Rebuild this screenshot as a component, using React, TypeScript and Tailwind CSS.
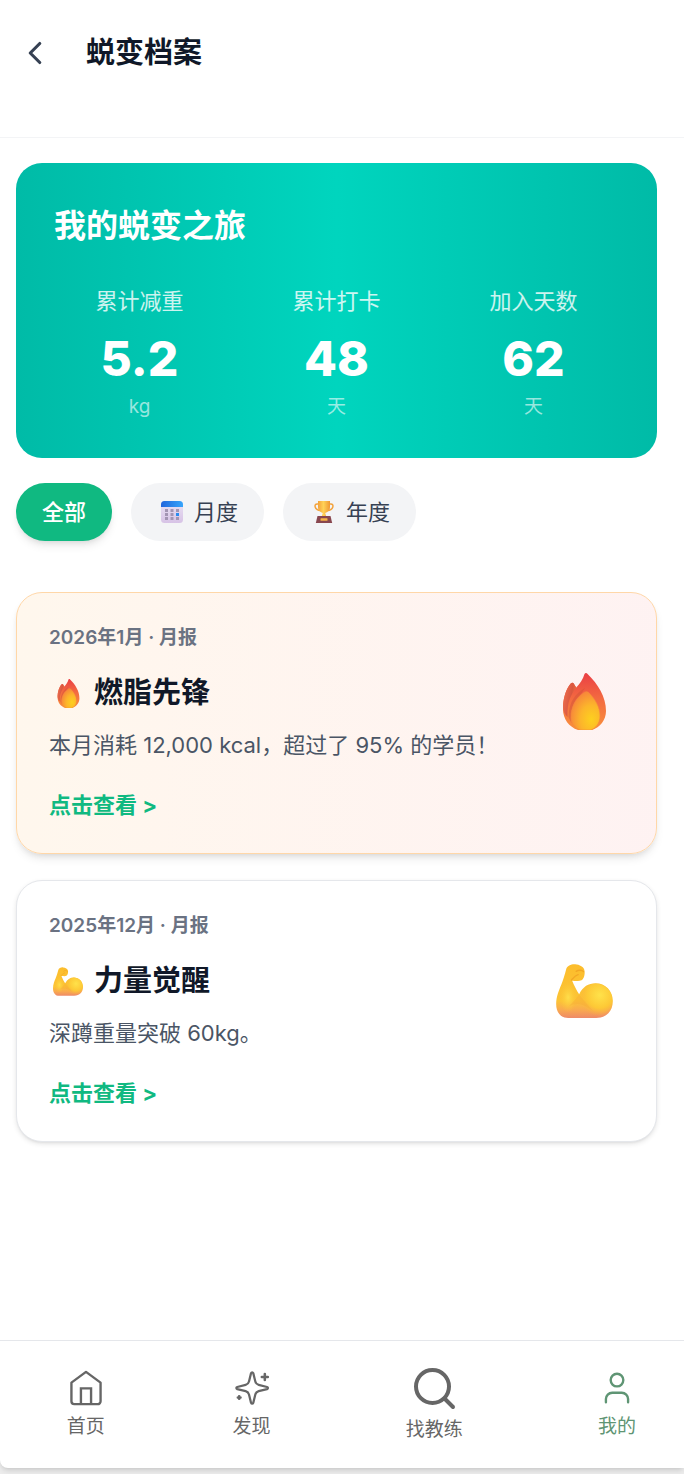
/**
 * TransformArchive — the "蜕变档案" page of the fitness app.
 *
 * Top to bottom: page header, journey summary card, period filter,
 * list of report cards and the bottom tab bar.
 */

import { useId, useState, type ReactNode } from "react";
import { ChevronLeft, User } from "lucide-react";
import { clsx } from "clsx";

type Period = "all" | "month" | "year";

function Flame({ className }: { className?: string }) {
  const id = useId();
  return (
    <svg viewBox="0 0 43 57" className={className} aria-hidden>
      <defs>
        <linearGradient id={`${id}-outer`} x1="0.5" y1="0" x2="0.5" y2="1">
          <stop offset="0" stopColor="#ea3f45" />
          <stop offset="0.45" stopColor="#f36a40" />
          <stop offset="1" stopColor="#f9903c" />
        </linearGradient>
        <linearGradient id={`${id}-left`} x1="0" y1="0.2" x2="1" y2="0.6">
          <stop offset="0" stopColor="#ee6f4f" />
          <stop offset="0.6" stopColor="#d9573f" />
          <stop offset="1" stopColor="#f2793f" />
        </linearGradient>
        <radialGradient id={`${id}-core`} cx="0.7" cy="0.72" r="0.75">
          <stop offset="0" stopColor="#fdd01f" />
          <stop offset="0.5" stopColor="#fcb52b" />
          <stop offset="1" stopColor="#f7853b" />
        </radialGradient>
      </defs>
      <path
        d="M21.5 1C22.3 -0.2 23.6 -0.2 24.6 1C35 11 43 24 43 38C43 47 37 54.5 29 57H15C6 54 0 46 0 36C0 26 3 16 7.5 10.8C8.8 9.2 10.3 9.4 11 11L13.2 14.5C17 11 20 6 21.5 1Z"
        fill={`url(#${id}-outer)`}
      />
      <path
        d="M7.5 10.8C8.8 9.2 10.3 9.4 11 11L13.2 14.5C8 22 4 28 4.5 44C1.7 41 0 38 0 34C0 26 3 16 7.5 10.8Z"
        fill={`url(#${id}-left)`}
      />
      <path
        d="M22 15C13 20 6 28 5.5 44L8.5 50C7 38 10 28 18 21Z"
        fill="#cf5237"
        opacity="0.45"
      />
      <path
        d="M21 19.5C22.5 18.3 24.5 18.3 26 19.8C32 26 37 34 37 43C37 50 33 55 28 57H17C11 54.5 8 50 8 44C8 34 13 25 21 19.5Z"
        fill={`url(#${id}-core)`}
        stroke="#f58a3a"
        strokeWidth="0.6"
      />
    </svg>
  );
}

function Biceps({ className }: { className?: string }) {
  const id = useId();
  return (
    <svg viewBox="0 0 170 162" className={className} aria-hidden>
      <defs>
        <linearGradient id={`${id}-arm`} x1="0.5" y1="0" x2="0.5" y2="1">
          <stop offset="0" stopColor="#fcbd2c" />
          <stop offset="0.68" stopColor="#fcc436" />
          <stop offset="0.85" stopColor="#f9a950" />
          <stop offset="1" stopColor="#ee8a68" />
        </linearGradient>
        <radialGradient id={`${id}-muscle`} cx="0.62" cy="0.35" r="0.65">
          <stop offset="0" stopColor="#ffe24a" />
          <stop offset="0.6" stopColor="#fdc936" />
          <stop offset="1" stopColor="#f9b13d" stopOpacity="0" />
        </radialGradient>
        <radialGradient id={`${id}-fore`} cx="0.5" cy="0.5" r="0.5">
          <stop offset="0" stopColor="#ffde4b" />
          <stop offset="1" stopColor="#fdc936" stopOpacity="0" />
        </radialGradient>
      </defs>
      <path
        d="M30 16C33 5 46 0 57 1C70 2 84 9 85 20C87 31 83 45 76 49C68 53 56 50 48 50C54 65 62 80 69 91C80 68 97 58 118 58C148 58 170 81 170 111C170 141 151 162 120 162H36C13 162 0 145 0 120C0 98 9 77 15 63C21 49 26 31 30 16Z"
        fill={`url(#${id}-arm)`}
      />
      <ellipse cx="36" cy="100" rx="26" ry="46" fill={`url(#${id}-fore)`} />
      <circle cx="119" cy="108" r="49" fill={`url(#${id}-muscle)`} />
      <path d="M69 92L40 126C55 117 80 116 110 141Z" fill="#f5a234" opacity="0.3" />
      <path
        d="M60 22C67 17 78 18 82 23M46 48C53 40 57 34 66 32"
        fill="none"
        stroke="#ed9b20"
        strokeWidth="4"
        strokeLinecap="round"
        opacity="0.65"
      />
    </svg>
  );
}

function CalendarEmoji() {
  const id = useId();
  return (
    <svg viewBox="0 0 22 22" className="size-[22px]" aria-hidden>
      <defs>
        <linearGradient id={`${id}-top`} x1="0" x2="1">
          <stop offset="0" stopColor="#2266dc" />
          <stop offset="1" stopColor="#36a5fb" />
        </linearGradient>
        <linearGradient id={`${id}-page`} x1="0" y1="0" x2="0" y2="1">
          <stop offset="0" stopColor="#eae4f4" />
          <stop offset="1" stopColor="#d7c3e6" />
        </linearGradient>
      </defs>
      <rect width="22" height="22" rx="3.5" fill={`url(#${id}-page)`} />
      <path d="M0 6V3.5A3.5 3.5 0 0 1 3.5 0H18.5A3.5 3.5 0 0 1 22 3.5V6Z" fill={`url(#${id}-top)`} />
      <path
        d="M4 8h3v3H4zM9.5 8h3v3h-3zM15 8h3v3h-3zM4 12h3v3H4zM9.5 12h3v3h-3zM4 16h3v3H4zM9.5 16h3v3h-3zM15 16h3v3h-3z"
        fill="#a395b3"
      />
      <path d="M15 12h3v3h-3z" fill="#2c8cf0" />
    </svg>
  );
}

function TrophyEmoji() {
  const id = useId();
  return (
    <svg viewBox="0 0 20 22" className="h-[22px] w-5" aria-hidden>
      <defs>
        <linearGradient id={`${id}-cup`} x1="0" x2="1">
          <stop offset="0" stopColor="#f3a13a" />
          <stop offset="0.45" stopColor="#ffd257" />
          <stop offset="1" stopColor="#ef9732" />
        </linearGradient>
      </defs>
      <path
        d="M5 3H3.2C1.2 3 0.8 4.4 1.2 6C1.8 8.3 4 9.4 6.5 9.5M15 3H16.8C18.8 3 19.2 4.4 18.8 6C18.2 8.3 16 9.4 13.5 9.5"
        fill="none"
        stroke="#f2a23d"
        strokeWidth="1.5"
      />
      <path
        d="M4 0H16V6C16 9.5 13.8 11.3 11.2 12L12.4 16H7.6L8.8 12C6.2 11.3 4 9.5 4 6Z"
        fill={`url(#${id}-cup)`}
      />
      <path d="M3.5 15H16.5L18.2 22H1.8Z" fill="#88474f" />
      <rect x="6.5" y="17.3" width="7" height="2.5" rx="0.5" fill="#f6b345" />
    </svg>
  );
}

function HomeIcon() {
  return (
    <svg
      viewBox="0 0 24 24"
      className="size-[38px]"
      fill="none"
      stroke="currentColor"
      strokeWidth="1.5"
      strokeLinejoin="round"
      aria-hidden
    >
      <path d="M12 1.8L2.8 8.6V20.4A1.8 1.8 0 0 0 4.6 22.2H19.4A1.8 1.8 0 0 0 21.2 20.4V8.6Z" />
      <path d="M8.8 22V12.2H15.2V22" strokeLinejoin="miter" />
    </svg>
  );
}

function DiscoverIcon() {
  return (
    <svg
      viewBox="0 0 24 24"
      className="size-[38px]"
      fill="none"
      stroke="currentColor"
      strokeLinecap="round"
      strokeLinejoin="round"
      aria-hidden
    >
      <path
        d="M11.4 2.6C11.7 1.9 12.5 1.9 12.8 2.6L14.1 7.9C14.4 9.1 15 9.7 16.2 10L21.5 11.4C22.3 11.7 22.3 12.4 21.5 12.7L16.2 14C15 14.3 14.4 14.9 14.1 16.1L12.8 21.4C12.5 22.1 11.7 22.1 11.4 21.4L10.1 16.1C9.8 14.9 9.2 14.3 8 14L2.7 12.7C1.9 12.4 1.9 11.7 2.7 11.4L8 10C9.2 9.7 9.8 9.1 10.1 7.9Z"
        strokeWidth="1.4"
      />
      <path d="M20.1 3.2V7M18.2 5.1H22" strokeWidth="1.6" />
      <path d="M3.9 17.2V18.8M3.1 18H4.7" strokeWidth="1.7" />
    </svg>
  );
}

function SearchIcon() {
  return (
    <svg
      viewBox="0 0 44 44"
      className="size-11"
      fill="none"
      stroke="currentColor"
      strokeWidth="4"
      strokeLinecap="round"
      aria-hidden
    >
      <circle cx="20.5" cy="20.5" r="16.5" />
      <path d="M32.5 32.5L41 41" />
    </svg>
  );
}

const STATS = [
  { label: "累计减重", value: "5.2", unit: "kg" },
  { label: "累计打卡", value: "48", unit: "天" },
  { label: "加入天数", value: "62", unit: "天" },
];

const FILTERS: { id: Period; label: string; icon?: ReactNode }[] = [
  { id: "all", label: "全部" },
  { id: "month", label: "月度", icon: <CalendarEmoji /> },
  { id: "year", label: "年度", icon: <TrophyEmoji /> },
];

const REPORTS = [
  {
    date: "2026年1月 · 月报",
    title: "燃脂先锋",
    text: "本月消耗 12,000 kcal，超过了 95% 的学员！",
    smallIcon: <Flame className="h-[29px] w-[23px]" />,
    largeIcon: <Flame className="h-[57px] w-[43px]" />,
    highlighted: true,
  },
  {
    date: "2025年12月 · 月报",
    title: "力量觉醒",
    text: "深蹲重量突破 60kg。",
    smallIcon: <Biceps className="h-[29px] w-[30px]" />,
    largeIcon: <Biceps className="h-[54px] w-[57px]" />,
    highlighted: false,
  },
];

const TABS = [
  { label: "首页", icon: <HomeIcon /> },
  { label: "发现", icon: <DiscoverIcon /> },
  { label: "找教练", icon: <SearchIcon /> },
  { label: "我的", icon: <User size={38} strokeWidth={1.5} aria-hidden />, active: true },
];

function ReportCard({ report }: { report: (typeof REPORTS)[number] }) {
  return (
    <article
      className={clsx(
        "flex items-start justify-between rounded-[26px] border p-8",
        report.highlighted
          ? "border-orange-200 bg-linear-to-r from-orange-50 to-red-50 shadow-[0_6px_10px_-2px_rgb(0_0_0/0.1),0_3px_6px_-3px_rgb(0_0_0/0.1)]"
          : "border-gray-200 bg-white shadow-[0_2px_5px_0_rgb(0_0_0/0.1),0_2px_3px_-2px_rgb(0_0_0/0.1)]",
      )}
    >
      <div>
        <p className="text-[19px] leading-[25px] font-semibold text-gray-500">{report.date}</p>
        <h3 className="mt-[23px] flex items-center gap-[7px] text-[29px] leading-10 font-bold text-gray-900">
          <span className="flex w-[38px] justify-center">{report.smallIcon}</span>
          {report.title}
        </h3>
        <p className="mt-[14px] text-[22px] leading-9 text-gray-600">{report.text}</p>
        <a
          href="#report"
          className="mt-[26px] block text-[22px] leading-8 font-bold text-[#10b981]"
        >
          点击查看 &gt;
        </a>
      </div>
      <div className="mt-12 flex h-[57px] w-20 shrink-0 items-end justify-center">
        {report.largeIcon}
      </div>
    </article>
  );
}

export default function App() {
  const [period, setPeriod] = useState<Period>("all");

  return (
    <div className="min-h-screen bg-[#ededed] pb-[6px] font-['Inter','Noto_Sans_CJK_SC',sans-serif]">
      <div className="flex min-h-[calc(100vh-6px)] flex-col rounded-bl-lg bg-white shadow-md">
        <header className="flex items-center gap-8 border-b border-gray-100 px-4 pt-[34px] pb-[65px]">
          <button type="button" aria-label="返回" className="text-gray-700">
            <ChevronLeft size={38} aria-hidden />
          </button>
          <h1 className="text-[29px] leading-[38px] font-bold text-gray-900">蜕变档案</h1>
        </header>

        <main className="flex-1 pt-[25px] pr-[27px] pb-16 pl-4">
          <section className="rounded-[26px] bg-linear-to-r from-[#00bba7] via-[#00d5be] to-[#00bba7] px-[38px] pt-10 pb-[37px] text-white">
            <h2 className="text-[32px] leading-[46px] font-bold">我的蜕变之旅</h2>
            <div className="mt-9 grid grid-cols-3 gap-[26px] text-center">
              {STATS.map((stat) => (
                <div key={stat.label}>
                  <p className="text-[22px] leading-8 text-white/80">{stat.label}</p>
                  <p className="mt-[18px] text-5xl leading-[48px] font-extrabold">{stat.value}</p>
                  <p className="mt-[10px] text-[19px] leading-7 text-white/60">{stat.unit}</p>
                </div>
              ))}
            </div>
          </section>

          <div className="mt-[25px] flex gap-[19px]">
            {FILTERS.map((filter) => (
              <button
                key={filter.id}
                type="button"
                aria-pressed={period === filter.id}
                onClick={() => setPeriod(filter.id)}
                className={clsx(
                  "flex h-[58px] items-center gap-[7px] rounded-full px-[26px] text-[22px]",
                  period === filter.id
                    ? "bg-[#10b981] font-medium text-white shadow-[0_6px_10px_-2px_rgb(0_0_0/0.1),0_3px_6px_-3px_rgb(0_0_0/0.1)]"
                    : "bg-gray-100 text-gray-700",
                )}
              >
                {filter.icon && (
                  <span className="flex w-[30px] justify-center">{filter.icon}</span>
                )}
                {filter.label}
              </button>
            ))}
          </div>

          <div className="mt-[51px] flex flex-col gap-[26px]">
            {REPORTS.map((report) => (
              <ReportCard key={report.title} report={report} />
            ))}
          </div>
        </main>

        {/* The search tab is wider than the others, so the columns are uneven. */}
        <nav className="grid h-32 grid-cols-[83fr_83fr_100fr_75fr] items-center border-t border-gray-200 pl-[3px]">
          {TABS.map((tab) => (
            <a
              key={tab.label}
              href="#tab"
              aria-current={tab.active ? "page" : undefined}
              className={clsx(
                "flex flex-col items-center gap-[7px] text-[19px] leading-[26px]",
                tab.active ? "pl-4 text-[#5f9574]" : "text-[#666666]",
              )}
            >
              {tab.icon}
              {tab.label}
            </a>
          ))}
        </nav>
      </div>
    </div>
  );
}
